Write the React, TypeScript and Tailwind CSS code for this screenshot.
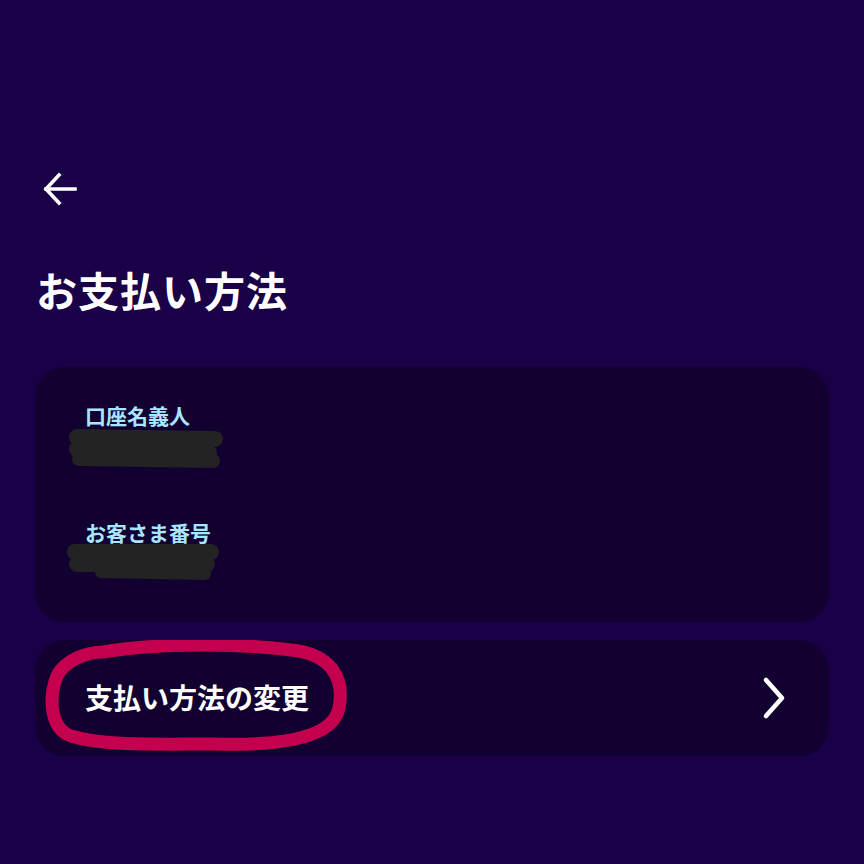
import React from 'react';

const font = { fontFamily: '"Noto Sans CJK JP", "Noto Sans", sans-serif' };

// Redaction smear drawn over the hidden value
const Smear: React.FC<{ variant: 'a' | 'b' }> = ({ variant }) => (
    <svg width="160" height="46" viewBox="0 0 160 46" className="block">
        {variant === 'a' ? (
            <>
                <path d="M8 10 L146 12" stroke="#232323" strokeWidth="16" strokeLinecap="round" />
                <path d="M8 22 L140 26" stroke="#232323" strokeWidth="16" strokeLinecap="round" />
                <path d="M10 32 L144 34" stroke="#232323" strokeWidth="14" strokeLinecap="round" />
            </>
        ) : (
            <>
                <path d="M8 12 L144 12" stroke="#232323" strokeWidth="16" strokeLinecap="round" />
                <path d="M10 24 L140 24" stroke="#232323" strokeWidth="16" strokeLinecap="round" />
                <path d="M34 32 L138 34" stroke="#232323" strokeWidth="12" strokeLinecap="round" />
            </>
        )}
    </svg>
);

const App: React.FC = () => {
    return (
        <div className="w-[864px] h-[864px] bg-[#1a0047] text-white overflow-hidden" style={font}>
            <div className="pt-[170px] px-[35px]">
                <button className="ml-[6px] w-[36px] h-[36px] flex items-center justify-center">
                    <svg width="36" height="36" viewBox="0 0 36 36" fill="none" stroke="white" strokeWidth="3.6" strokeLinecap="square">
                        <path d="M34 19 H5" />
                        <path d="M18 5 L5 19 L18 33" />
                    </svg>
                </button>

                <h1 className="mt-[57px] text-[41px] font-bold leading-[52px] tracking-[1px] ml-[1px]">お支払い方法</h1>

                <div className="mt-[52px] bg-[#110030] rounded-[30px] h-[255px] pl-[50px] pt-[34px]">
                    <p className="text-[21px] font-bold leading-[28px] text-[#a8e6ff]">口座名義人</p>
                    <div className="-ml-[16px] -mt-[2px]">
                        <Smear variant="a" />
                    </div>
                    <p className="mt-[45px] text-[21px] font-bold leading-[28px] text-[#a8e6ff]">お客さま番号</p>
                    <div className="-ml-[18px] -mt-[6px]">
                        <Smear variant="b" />
                    </div>
                </div>

                <div className="relative mt-[18px] bg-[#110030] rounded-[30px] h-[116px] flex items-center justify-between pl-[50px] pr-[42px]">
                    <span className="text-[28px] font-bold leading-[36px] -mt-[2px]">支払い方法の変更</span>
                    <svg width="28" height="46" viewBox="0 0 28 46" fill="none" stroke="white" strokeWidth="4.6" strokeLinecap="round" strokeLinejoin="round">
                        <path d="M7 5 L23 23 L7 41" />
                    </svg>
                    <svg className="absolute left-[8px] top-0 pointer-events-none" width="308" height="116" viewBox="0 0 308 116" fill="none">
                        <path
                            d="M60 12 C120 2 200 4 248 10 C288 14 302 38 296 68 C290 98 238 106 170 104 C110 104 60 106 28 96 C6 88 6 56 14 36 C22 20 44 12 60 12 Z"
                            stroke="#c4004e"
                            strokeWidth="13"
                            strokeLinejoin="round"
                        />
                    </svg>
                </div>
            </div>
        </div>
    );
};

export default App;
